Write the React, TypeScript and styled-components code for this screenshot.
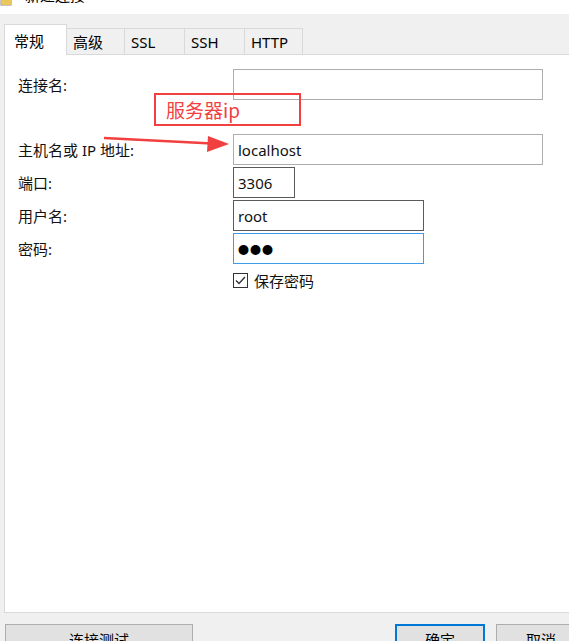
import * as React from 'react';
import styled, { createGlobalStyle } from 'styled-components';

const Global = createGlobalStyle`
    html, body {
        margin: 0;
        padding: 0;
        background: #f0f0f0;
        overflow: hidden;
    }
    body {
        font-family: "Noto Sans", "Noto Sans CJK SC", sans-serif;
        font-size: 15px;
        color: #000;
    }
`;

const Window = styled.div`
    width: 569px;
    height: 641px;
    display: flex;
    flex-direction: column;
    overflow: hidden;
`;

const TitleBar = styled.div`
    height: 14px;
    flex: none;
    background: #fff;
    display: flex;
    align-items: flex-start;
    overflow: hidden;
`;

const TitleIcon = styled.svg`
    margin-top: -9px;
    flex: none;
`;

const TitleText = styled.span`
    margin: -12px 0 0 12px;
    font-size: 15px;
    line-height: 15px;
    color: #000;
`;

const TabStrip = styled.div`
    flex: none;
    display: flex;
    align-items: flex-end;
    margin: 10px 0 -1px 4px;
    height: 31px;
    position: relative;
    z-index: 1;
`;

const Tab = styled.div<{ active?: boolean; w: number }>`
    width: ${p => p.w}px;
    height: ${p => p.active ? 31 : 27}px;
    box-sizing: border-box;
    display: flex;
    align-items: center;
    padding-left: ${p => p.active ? 9 : 6}px;
    background: ${p => p.active ? '#fff' : '#f0f0f0'};
    border: 1px solid #d9d9d9;
    border-bottom: ${p => p.active ? 'none' : '1px solid #d9d9d9'};
    border-left: ${p => p.active ? '1px solid #d9d9d9' : 'none'};
    font-size: 15px;
    color: #000;
`;

const Panel = styled.div`
    flex: none;
    position: relative;
    margin-left: 4px;
    margin-right: -4px;
    height: 559px;
    box-sizing: border-box;
    background: #fff;
    border: 1px solid #d9d9d9;
    padding: 14px 0 0 13px;
`;

const Form = styled.div`
    display: grid;
    grid-template-columns: 215px 1fr;
    row-gap: 2px;
    align-items: center;
`;

const Label = styled.div<{ gap?: number }>`
    font-size: 15px;
    color: #111;
    margin-top: ${p => p.gap || 0}px;
`;

const Field = styled.div<{ w: number; tone?: 'light' | 'dark' | 'focus'; gap?: number }>`
    width: ${p => p.w}px;
    height: 31px;
    box-sizing: border-box;
    margin-top: ${p => p.gap || 0}px;
    border: 1px solid ${p => p.tone === 'dark' ? '#5a5a5a' : p.tone === 'focus' ? '#3d9be9' : '#adadad'};
    display: flex;
    align-items: center;
    padding-left: 4px;
    font-size: 15px;
    color: #111;
    background: #fff;
`;

const Dots = styled.span`
    font-size: 11px;
    letter-spacing: 1px;
    color: #000;
`;

const CheckRow = styled.label`
    display: flex;
    align-items: center;
    gap: 6px;
    margin-top: 4px;
    font-size: 15px;
    color: #111;
`;

const Box = styled.span`
    width: 15px;
    height: 15px;
    box-sizing: border-box;
    border: 1px solid #333;
    display: flex;
    align-items: center;
    justify-content: center;
`;

const Note = styled.div`
    position: absolute;
    left: 149px;
    top: 38px;
    width: 147px;
    height: 33px;
    box-sizing: border-box;
    border: 2px solid #f23f3f;
    padding-left: 10px;
    display: flex;
    align-items: center;
    color: #f23f3f;
    font-size: 19px;
    font-family: "Noto Sans CJK SC", sans-serif;
`;

const Arrow = styled.svg`
    position: absolute;
    left: 95px;
    top: 74px;
`;

const Footer = styled.div`
    flex: none;
    display: flex;
    gap: 11px;
    padding: 11px 0 0 5px;
`;

const Button = styled.div<{ w: number; primary?: boolean; push?: number }>`
    flex: none;
    width: ${p => p.w}px;
    height: 30px;
    box-sizing: border-box;
    margin-left: ${p => p.push || 0}px;
    background: #e1e1e1;
    border: ${p => p.primary ? '2px solid #0078d7' : '1px solid #adadad'};
    display: flex;
    align-items: center;
    justify-content: center;
    font-size: 15px;
    color: #000;
`;

const tabs = [
    { name: '常规', w: 63 },
    { name: '高级', w: 58 },
    { name: 'SSL', w: 60 },
    { name: 'SSH', w: 60 },
    { name: 'HTTP', w: 58 },
];

export default function App() {
    return (
        <Window>
            <Global />
            <TitleBar>
                <TitleIcon width="13" height="16" viewBox="0 0 13 16">
                    <rect x="1" y="1" width="10" height="13" fill="#fff" stroke="#8a8a8a" />
                    <rect x="2" y="9" width="9" height="5" fill="#e9c75a" />
                </TitleIcon>
                <TitleText>新建连接</TitleText>
            </TitleBar>
            <TabStrip>
                {tabs.map((t, i) => (
                    <Tab key={t.name} w={t.w} active={i === 0}>{t.name}</Tab>
                ))}
            </TabStrip>
            <Panel>
                <Form>
                    <Label>连接名:</Label>
                    <Field w={310} tone="light" />
                    <Label gap={32}>主机名或 IP 地址:</Label>
                    <Field w={310} tone="light" gap={32}>localhost</Field>
                    <Label>端口:</Label>
                    <Field w={62} tone="dark">3306</Field>
                    <Label>用户名:</Label>
                    <Field w={191} tone="dark">root</Field>
                    <Label>密码:</Label>
                    <Field w={191} tone="focus"><Dots>●●●</Dots></Field>
                    <div />
                    <CheckRow>
                        <Box>
                            <svg width="11" height="9" viewBox="0 0 11 9">
                                <path d="M1 4.5 L4 7.5 L10 1" fill="none" stroke="#333" strokeWidth="1.4" />
                            </svg>
                        </Box>
                        保存密码
                    </CheckRow>
                </Form>
                <Note>服务器ip</Note>
                <Arrow width="135" height="26" viewBox="0 0 135 26">
                    <path d="M4 9 L112 14.5" stroke="#f23f3f" strokeWidth="2.5" fill="none" />
                    <polygon points="108,7 129,15 107,23" fill="#f23f3f" />
                </Arrow>
            </Panel>
            <Footer>
                <Button w={188}>连接测试</Button>
                <Button w={90} primary push={191}>确定</Button>
                <Button w={90}>取消</Button>
            </Footer>
        </Window>
    );
}
